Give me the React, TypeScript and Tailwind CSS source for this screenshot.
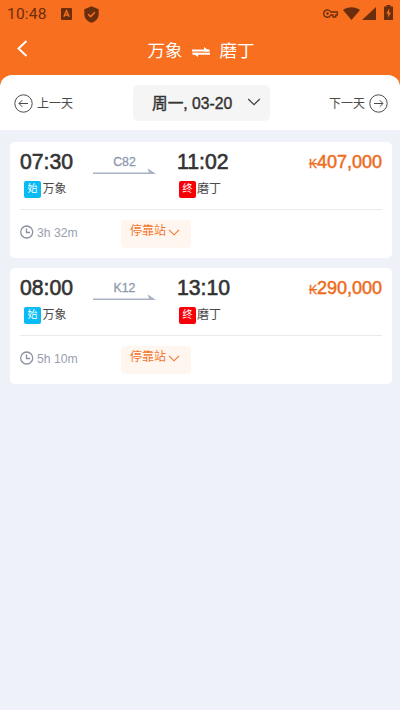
const trains = [
  { code: 'C82', depart: '07:30', arrive: '11:02', from: '万象', to: '磨丁', duration: '3h 32m', price: '407,000' },
  { code: 'K12', depart: '08:00', arrive: '13:10', from: '万象', to: '磨丁', duration: '5h 10m', price: '290,000' },
];

type Train = (typeof trains)[number];

function StatusBar() {
  return (
    <div className="h-7 px-[7px] flex items-center text-[#6b2e0c]">
      <span className="w-[54px] font-[Roboto] text-[15.5px] leading-7 tracking-[0.2px]">10:48</span>
      <svg className="w-[11px] h-[12px]" viewBox="0 0 11 12">
        <rect width="11" height="12" rx="1" fill="currentColor" />
        <path d="M2.8 8.8L5.5 2.8L8.2 8.8M3.8 7h3.4" fill="none" stroke="#f86f20" strokeWidth="1.4" />
      </svg>
      <svg className="w-[15px] h-[17px] ml-3" viewBox="0 0 15 17">
        <path d="M7.5 0.3L14.7 3.2v5c0 4-3 7.3-7.2 8.5C3.3 15.5 0.3 12.2 0.3 8.2v-5z" fill="currentColor" />
        <path d="M4.2 8.3l2.4 2.3l4.3-4.3" fill="none" stroke="#f86f20" strokeWidth="1.5" />
      </svg>
      <div className="ml-auto flex items-center">
        <svg className="w-[15px] h-[9px] -mt-[2px]" viewBox="0 0 15 9">
          <path d="M4.5 0.8a3.7 3.7 0 1 0 3.3 5.2h2.2v2h2.8v-2h1.5v-3h-6.5a3.7 3.7 0 0 0-3.3-2.2z" fill="none" stroke="currentColor" strokeWidth="1.3" />
          <circle cx="4.5" cy="4.5" r="1.2" fill="currentColor" />
        </svg>
        <svg className="w-[17px] h-[13px] ml-[5px] -mt-[2px]" viewBox="0 0 17 13">
          <path d="M0 3C5-0.8 12-0.8 17 3L8.5 13z" fill="currentColor" />
        </svg>
        <svg className="w-[14px] h-[13px] ml-[2px] -mt-px" viewBox="0 0 14 13">
          <path d="M14 0v13H0z" fill="currentColor" />
        </svg>
        <svg className="w-[9px] h-[15px] ml-2 -mt-[3px]" viewBox="0 0 9 15">
          <path d="M2.5 0h4v1.5H9V15H0V1.5h2.5z" fill="currentColor" />
          <path d="M5.2 3.5L2.3 8.8h1.9v4L6.9 7.5H5.2z" fill="#f86f20" />
        </svg>
      </div>
    </div>
  );
}

function Header() {
  return (
    <div className="h-[47px] relative flex items-center justify-center pl-[2px] text-white">
      <svg className="absolute left-[17px] top-3 w-[11px] h-[17px]" viewBox="0 0 11 17">
        <path d="M9.5 1L1.5 8.5L9.5 16" fill="none" stroke="currentColor" strokeWidth="1.9" />
      </svg>
      <span className="text-[17.5px] leading-[49px]">万象</span>
      <svg className="w-[18px] h-[10px] ml-[9px] mr-[10px]" viewBox="0 0 18 10">
        <path d="M0 3.5h17.5M18 6.7H0.5" fill="none" stroke="currentColor" strokeWidth="1.9" />
        <path d="M12 0L18 4.4h-6zM6 10L0 5.8h6z" fill="currentColor" />
      </svg>
      <span className="text-[17.5px] leading-[49px]">磨丁</span>
    </div>
  );
}

function CircleArrow({ flip = false }: { flip?: boolean }) {
  return (
    <svg className={flip ? 'w-[19px] h-[19px] rotate-180' : 'w-[19px] h-[19px]'} viewBox="0 0 19 19" fill="none" stroke="#4a4a4a" strokeWidth="1">
      <circle cx="9.5" cy="9.5" r="8.7" />
      <path d="M14 9.5H5.2M8.3 6.2L5 9.5l3.3 3.3" />
    </svg>
  );
}

function DateBar() {
  return (
    <div className="h-[55px] bg-white rounded-t-[12px] pl-[14px] pr-3 pt-px flex items-center justify-between text-[#4a4a4a] text-[12px]">
      <div className="w-[119px] flex items-center gap-1">
        <CircleArrow />
        <span className="pt-px">上一天</span>
      </div>
      <div className="w-[137px] h-9 rounded-[5px] bg-[#f5f5f5] flex items-center pl-[19px] pr-[9px] justify-between text-[#333]">
        <span className="pt-px text-[15.7px] [-webkit-text-stroke:0.4px_#333]">周一, 03-20</span>
        <svg className="w-[14px] h-2 -mt-[2px]" viewBox="0 0 14 8">
          <path d="M1.2 1L7 6.7L12.8 1" fill="none" stroke="#444" strokeWidth="1.3" />
        </svg>
      </div>
      <div className="w-[118px] flex items-center justify-end gap-1">
        <span className="pt-px">下一天</span>
        <CircleArrow flip />
      </div>
    </div>
  );
}

function TrainCard({ train }: { train: Train }) {
  return (
    <div className="h-[116px] bg-white rounded-[5px] px-[10px]">
      <div className="h-[68px] flex border-b border-[#e9eaed]">
        <div className="w-[72px] pt-2">
          <div className="text-[21.2px] leading-6 text-[#333] [-webkit-text-stroke:0.6px_#333]">{train.depart}</div>
          <div className="mt-[6px] ml-1 flex items-start gap-[1.5px] text-[12px] text-[#4a4a4a]">
            <span className="w-[17px] h-[17px] mt-px rounded-[2px] bg-[#08bbf5] text-white text-[10px] leading-[15px] text-center">始</span>
            <span className="leading-[19px]">{train.from}</span>
          </div>
        </div>
        <div className="w-[65px] pt-3">
          <div className="text-center text-[12.3px] leading-4 text-[#8d99ae] [-webkit-text-stroke:0.3px_#8d99ae]">{train.code}</div>
          <svg className="w-16 h-[7px] -mt-[2px]" viewBox="0 0 64 7">
            <path d="M1 4.5H57L55.5 0.3L64 6H1z" fill="#a9b2c1" />
          </svg>
        </div>
        <div className="w-[80px] pt-2 ml-5">
          <div className="text-[21.2px] leading-6 text-[#333] [-webkit-text-stroke:0.6px_#333]">{train.arrive}</div>
          <div className="mt-[6px] ml-[2px] flex items-start gap-[1px] text-[12px] text-[#4a4a4a]">
            <span className="w-[17px] h-[17px] mt-px rounded-[2px] bg-[#f80008] text-white text-[10px] leading-[15px] text-center">终</span>
            <span className="leading-[19px]">{train.to}</span>
          </div>
        </div>
        <div className="ml-auto pt-2 text-[18px] leading-6 text-[#ee6b1c] [-webkit-text-stroke:0.5px_#ee6b1c] whitespace-nowrap">
          <span className="text-[12px] [-webkit-text-stroke:0.3px_#ee6b1c]">₭</span>
          {train.price}
        </div>
      </div>
      <div className="flex pt-[10px]">
        <div className="w-[101px] h-[26px] flex items-center gap-[3px] text-[12.2px] text-[#98a0ae]">
          <svg className="w-[14px] h-[14px] -mt-[2px]" viewBox="0 0 14 14" fill="none" stroke="#8791a2" strokeWidth="1.3">
            <circle cx="6.7" cy="7" r="6" />
            <path d="M6.5 3.5v4h3.5" />
          </svg>
          <span>{train.duration}</span>
        </div>
        <div className="w-[70px] h-7 rounded-[4px] bg-[#fff6f0] flex items-start pl-[9px] text-[12px] leading-[23px] text-[#f1752c]">
          <span>停靠站</span>
          <svg className="w-3 h-[7px] mt-[9px] ml-[2px]" viewBox="0 0 12 7">
            <path d="M1 0.8L6 5.8L11 0.8" fill="none" stroke="currentColor" strokeWidth="1.1" />
          </svg>
        </div>
      </div>
    </div>
  );
}

export default function App() {
  return (
    <div className="w-full h-[710px] overflow-hidden bg-[#eef2f8] font-['Liberation_Sans','Noto_Sans_CJK_SC',sans-serif]">
      <div className="bg-[#f86f20]">
        <StatusBar />
        <Header />
        <DateBar />
      </div>
      <div className="pt-3 pl-[10px] pr-2 flex flex-col gap-[10px]">
        {trains.map((t) => (
          <TrainCard key={t.code} train={t} />
        ))}
      </div>
    </div>
  );
}
